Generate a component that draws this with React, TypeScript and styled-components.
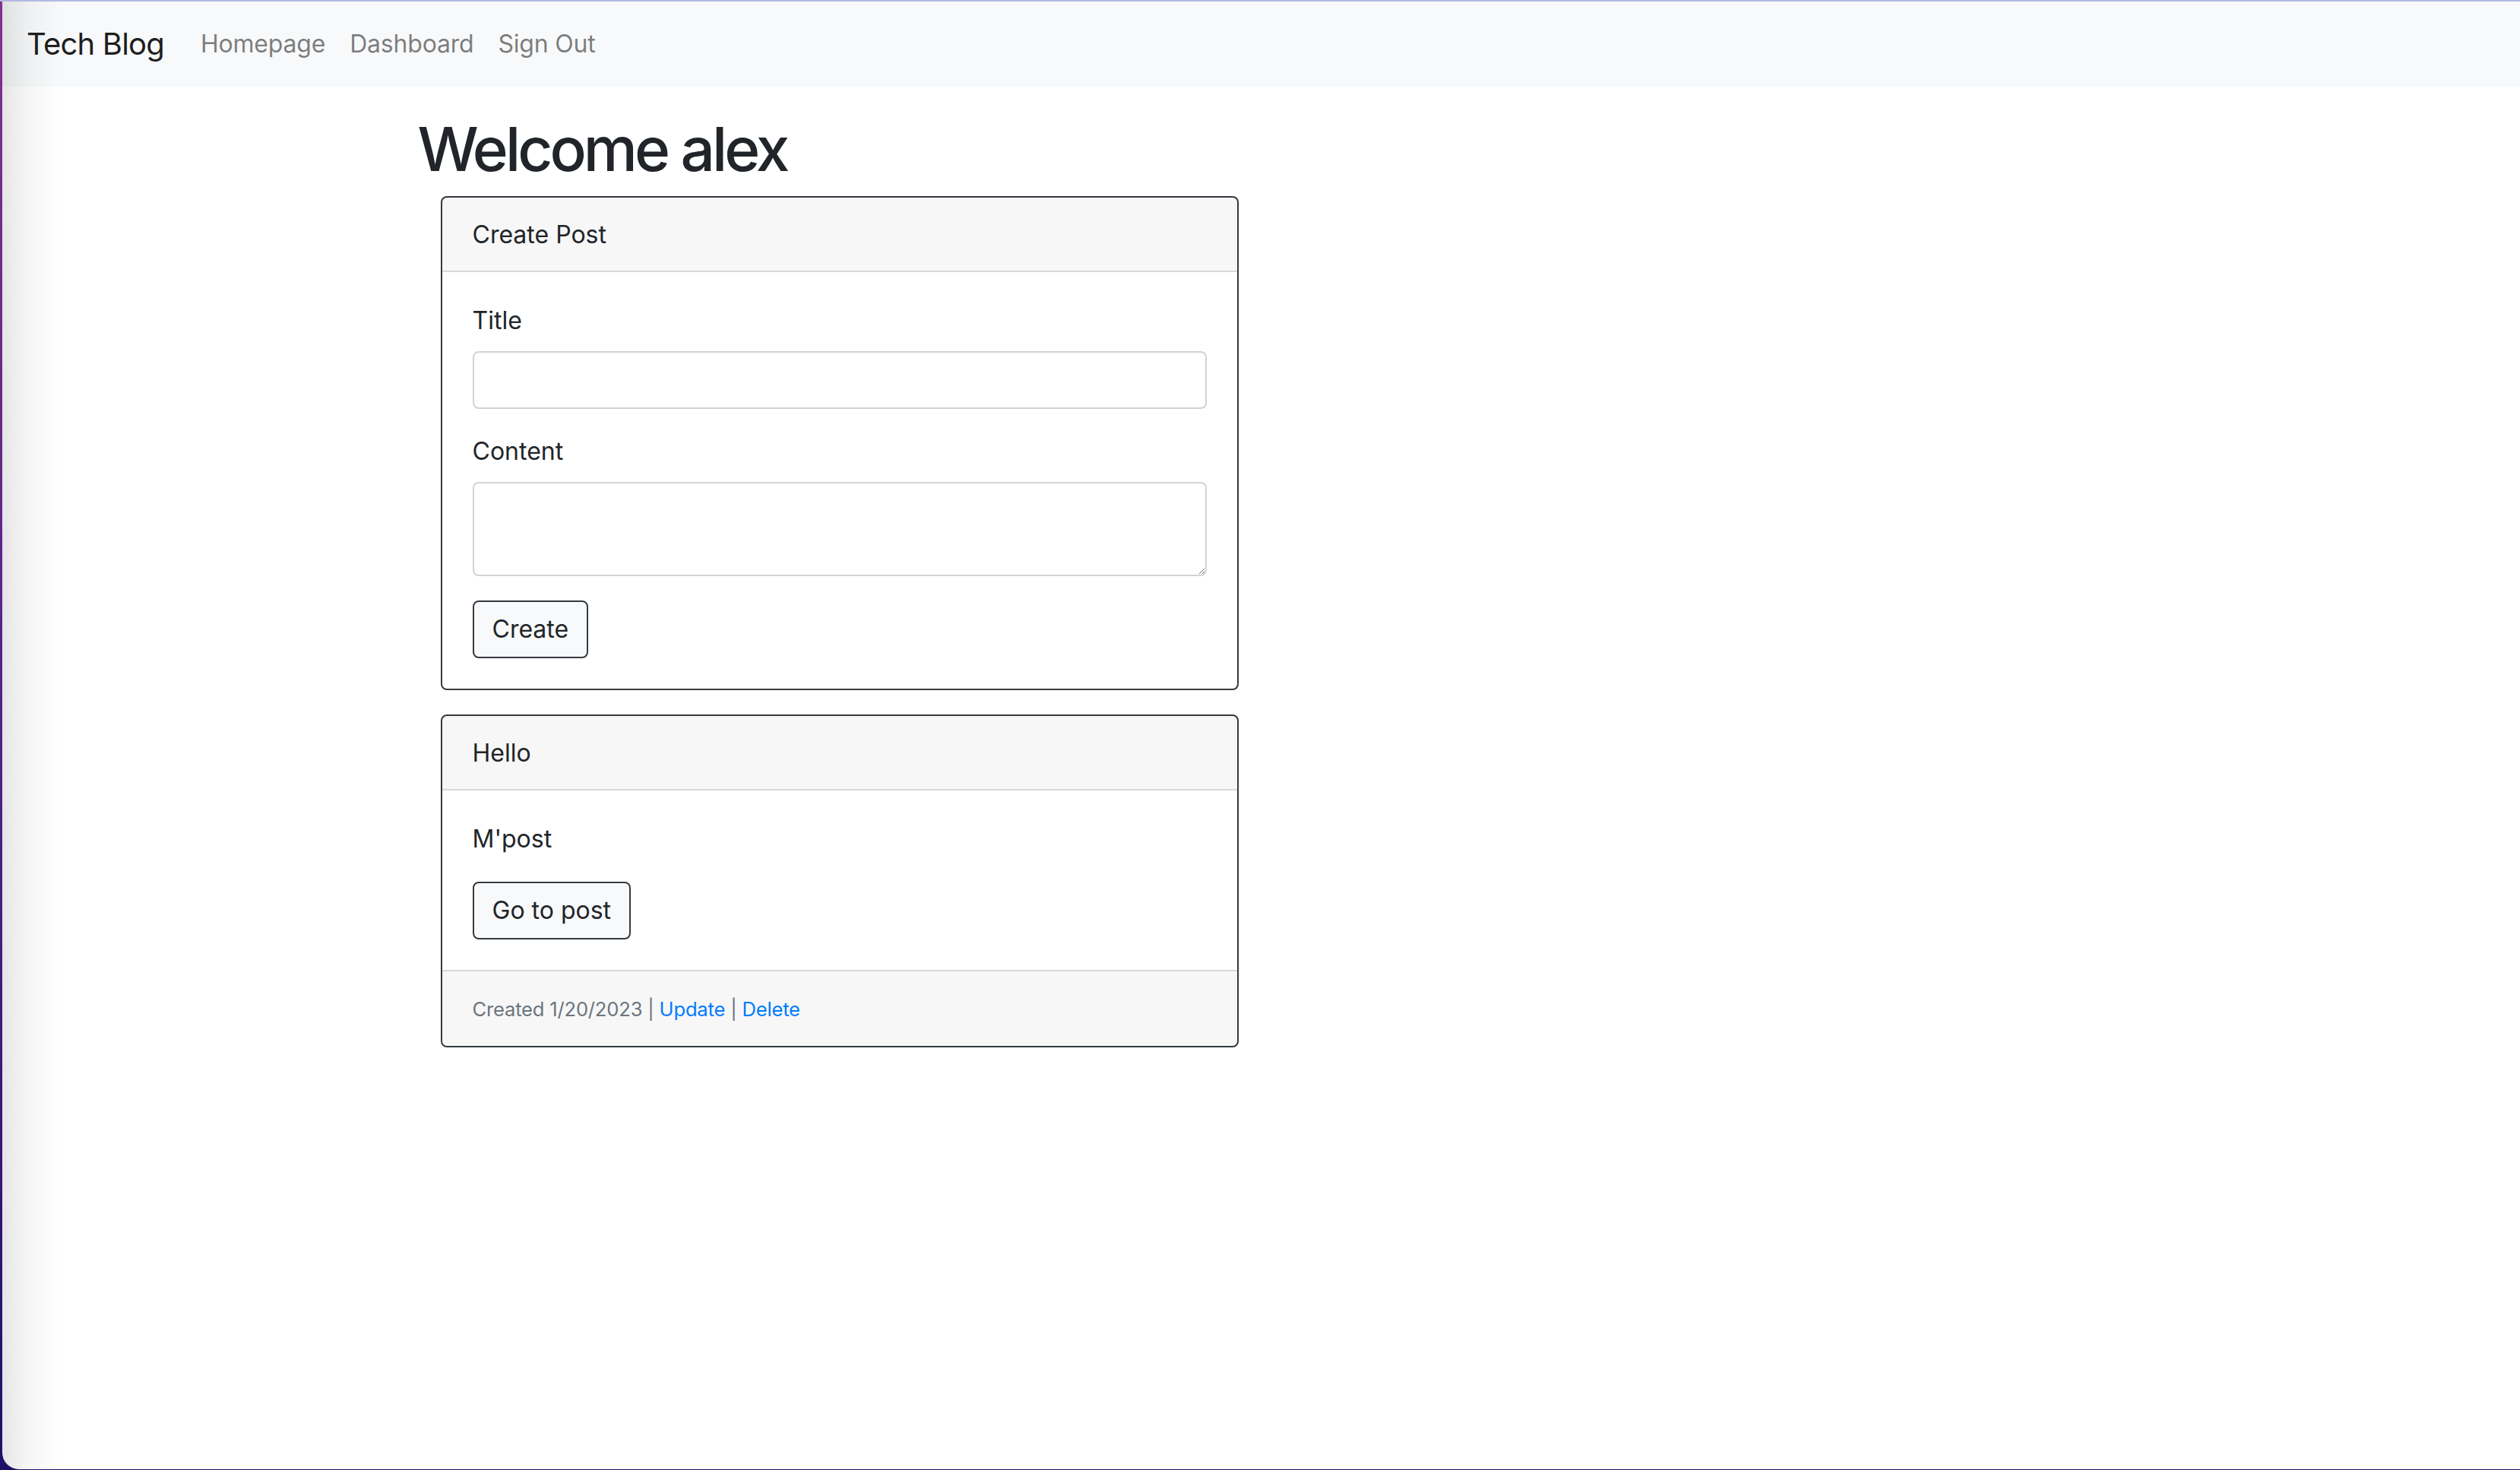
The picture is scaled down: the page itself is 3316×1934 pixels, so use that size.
import React from "react";
import styled, { createGlobalStyle } from "styled-components";

const GlobalStyle = createGlobalStyle`
  html, body {
    margin: 0;
    padding: 0;
  }
  body {
    font-family: Inter, "Noto Sans", "Liberation Sans", sans-serif;
    color: #212529;
    background: #1f0f66;
  }
  *, *::before, *::after {
    box-sizing: border-box;
  }
`;

const Desktop = styled.div`
  min-height: 100vh;
  border-top: 2px solid #b3b9e3;
  padding-left: 3px;
  background: linear-gradient(180deg, #83308f 0%, #55248a 45%, #1f0f66 100%);
`;

const Window = styled.div`
  position: relative;
  min-height: calc(100vh - 3px);
  background: #ffffff;
  border-bottom-left-radius: 22px;
  overflow: hidden;
`;

const EdgeShade = styled.div`
  position: absolute;
  top: 0;
  left: 0;
  bottom: 0;
  width: 78px;
  pointer-events: none;
  background: linear-gradient(90deg, rgba(0, 0, 0, 0.1) 0%, rgba(0, 0, 0, 0.04) 40%, rgba(0, 0, 0, 0) 100%);
  z-index: 5;
`;

const Navbar = styled.nav`
  display: flex;
  align-items: center;
  padding: 16px 32px;
  background: #f8f9fa;
`;

const Brand = styled.a`
  display: inline-block;
  padding: 10px 0;
  margin-right: 32px;
  font-size: 40px;
  line-height: 60px;
  letter-spacing: -0.8px;
  color: rgba(0, 0, 0, 0.9);
  text-decoration: none;
  white-space: nowrap;
`;

const NavList = styled.ul`
  display: flex;
  list-style: none;
  margin: 0;
  padding: 0;
`;

const NavLink = styled.a`
  display: block;
  padding: 16px 16px;
  font-size: 32px;
  line-height: 48px;
  letter-spacing: -0.2px;
  color: rgba(0, 0, 0, 0.5);
  text-decoration: none;
`;

const Container = styled.main`
  max-width: 2280px;
  margin: 0 auto;
  padding: 0 30px;
`;

const Heading = styled.h1`
  margin: 34px 0 14px;
  font-size: 80px;
  line-height: 96px;
  font-weight: 500;
  letter-spacing: -3.9px;
  color: #212529;
`;

const Row = styled.div`
  display: flex;
  flex-wrap: wrap;
`;

const Col = styled.div`
  flex: 0 0 50%;
  max-width: 50%;
  padding: 0 30px;
`;

const Card = styled.section`
  display: flex;
  flex-direction: column;
  background: #fff;
  border: 2px solid #343a40;
  border-radius: 8px;
  overflow: hidden;
  margin-bottom: 32px;
`;

const CardHeader = styled.div`
  padding: 25px 40px 23px;
  background: rgba(0, 0, 0, 0.03);
  border-bottom: 2px solid rgba(0, 0, 0, 0.125);
  font-size: 32px;
  line-height: 48px;
`;

const CardBody = styled.div`
  padding: 40px;
`;

const FormGroup = styled.div`
  margin-bottom: 32px;
`;

const Label = styled.label`
  display: inline-block;
  margin-bottom: 16px;
  font-size: 32px;
  line-height: 48px;
`;

const Input = styled.input`
  display: block;
  width: 100%;
  height: 76px;
  padding: 12px 24px;
  font-family: inherit;
  font-size: 32px;
  line-height: 48px;
  color: #495057;
  background: #fff;
  border: 2px solid #ced4da;
  border-radius: 8px;
  outline: none;
`;

const TextArea = styled.textarea`
  display: block;
  width: 100%;
  height: 124px;
  padding: 12px 24px;
  font-family: inherit;
  font-size: 32px;
  line-height: 48px;
  color: #495057;
  background: #fff;
  border: 2px solid #ced4da;
  border-radius: 8px;
  outline: none;
  resize: vertical;
`;

const Button = styled.button`
  display: inline-block;
  padding: 12px 24px;
  font-family: inherit;
  font-size: 32px;
  line-height: 48px;
  color: #212529;
  background: #f8f9fa;
  border: 2px solid #343a40;
  border-radius: 8px;
  cursor: pointer;
`;

const CardText = styled.p`
  margin: 0 0 32px;
  font-size: 32px;
  line-height: 48px;
`;

const CardFooter = styled.div`
  padding: 24px 40px;
  background: rgba(0, 0, 0, 0.03);
  border-top: 2px solid rgba(0, 0, 0, 0.125);
  font-size: 32px;
  line-height: 48px;
`;

const Meta = styled.small`
  font-size: 25.6px;
  letter-spacing: -0.2px;
  color: #6c757d;
`;

const MetaLink = styled.a`
  color: #007bff;
  text-decoration: none;
`;

export default function App() {
  return (
    <>
      <GlobalStyle />
      <Desktop>
        <Window>
          <EdgeShade />
          <Navbar>
            <Brand href="#">Tech Blog</Brand>
            <NavList>
              <li><NavLink href="#">Homepage</NavLink></li>
              <li><NavLink href="#">Dashboard</NavLink></li>
              <li><NavLink href="#">Sign Out</NavLink></li>
            </NavList>
          </Navbar>
          <Container>
            <Heading>Welcome alex</Heading>
            <Row>
              <Col>
                <Card>
                  <CardHeader>Create Post</CardHeader>
                  <CardBody>
                    <FormGroup>
                      <Label htmlFor="title">Title</Label>
                      <Input id="title" type="text" />
                    </FormGroup>
                    <FormGroup>
                      <Label htmlFor="content">Content</Label>
                      <TextArea id="content" rows={2} />
                    </FormGroup>
                    <Button type="button">Create</Button>
                  </CardBody>
                </Card>
                <Card>
                  <CardHeader>Hello</CardHeader>
                  <CardBody>
                    <CardText>M'post</CardText>
                    <Button type="button">Go to post</Button>
                  </CardBody>
                  <CardFooter>
                    <Meta>
                      Created 1/20/2023 | <MetaLink href="#">Update</MetaLink> | <MetaLink href="#">Delete</MetaLink>
                    </Meta>
                  </CardFooter>
                </Card>
              </Col>
            </Row>
          </Container>
        </Window>
      </Desktop>
    </>
  );
}
